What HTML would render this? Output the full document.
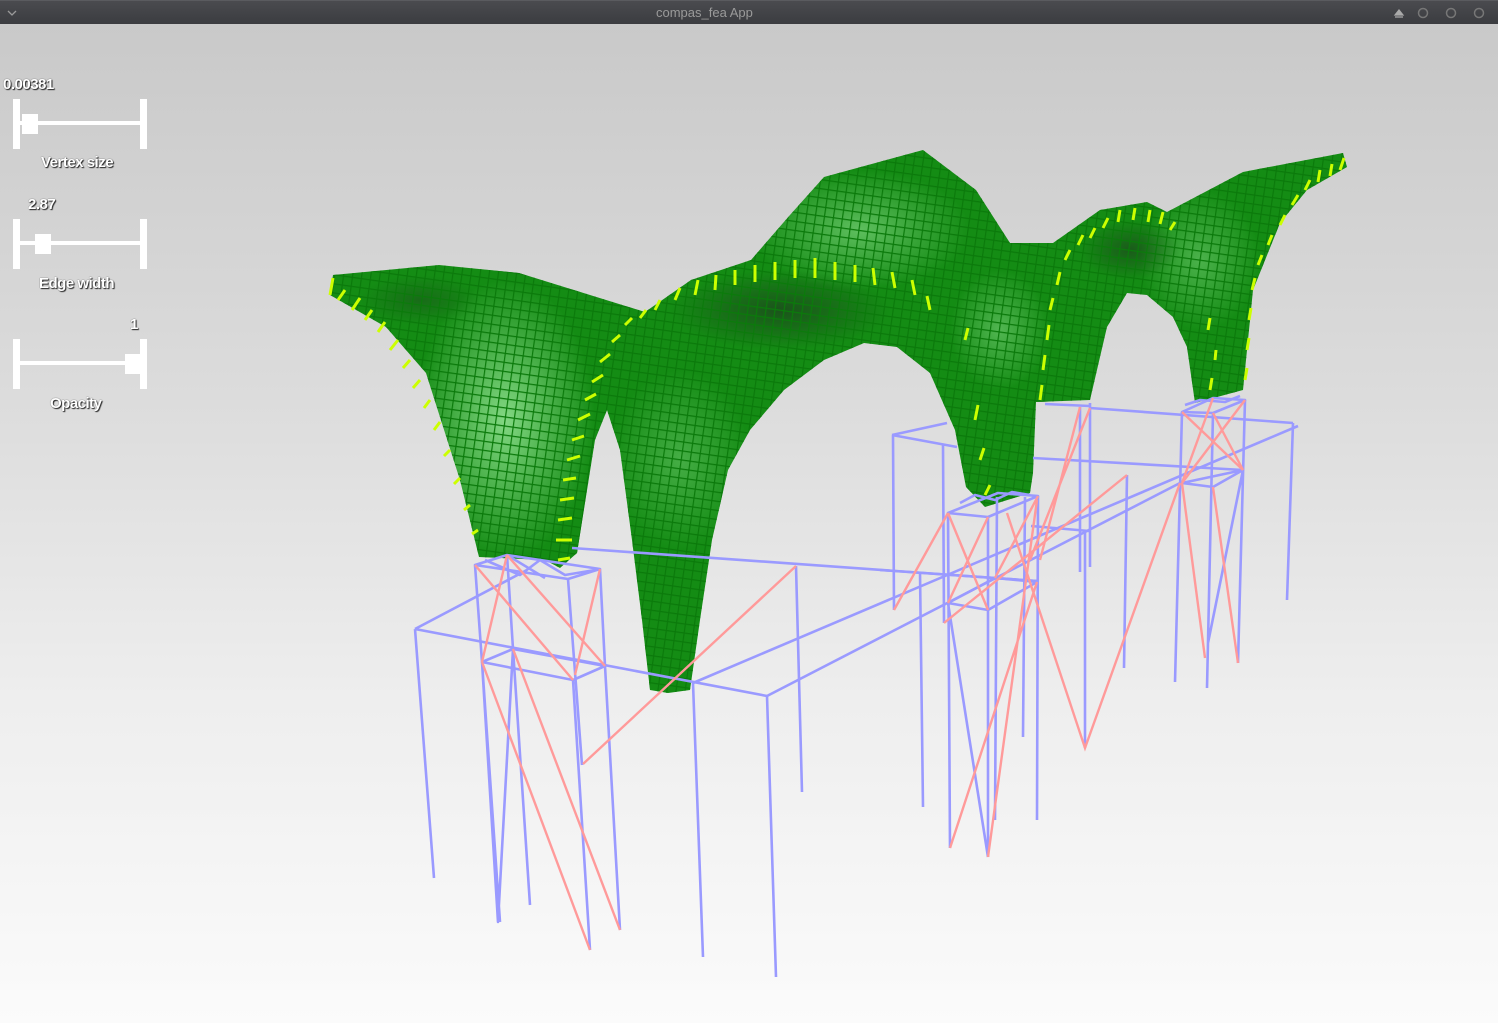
<!DOCTYPE html>
<html><head><meta charset="utf-8">
<style>
html,body{margin:0;padding:0;}
body{width:1498px;height:1023px;overflow:hidden;position:relative;font-family:"Liberation Sans",sans-serif;background:linear-gradient(#c9c9c9 24px,#dcdcdc 400px,#eeeeee 700px,#fbfbfb 1023px);}
.tb{position:absolute;left:0;top:0;width:1498px;height:24px;background:linear-gradient(#4a4b4f,#3b3c40);border-top:1px solid #5a5b5f;box-sizing:border-box;}
.tb .t{position:absolute;left:656px;top:4px;color:#9a9a9a;font-size:13px;}
.lbl{position:absolute;color:#fff;font-size:15px;font-weight:bold;text-shadow:1px 1px 1px #222,0 0 1px #444;letter-spacing:-0.5px;}
svg{position:absolute;left:0;top:0;}
</style></head><body>
<div class="tb"><div class="t">compas_fea App</div>
<svg width="1498" height="24" style="position:absolute">
<path d="M8 10 L12 14 L16 10" stroke="#9a9a9a" stroke-width="1.3" fill="none"/>
<path d="M1395 14 L1399 9 L1403 14 Z M1395 16 H1403" stroke="#aaa" fill="#aaa" stroke-width="1.2"/>
<circle cx="1423" cy="12" r="4.5" fill="none" stroke="#777" stroke-width="1.5"/>
<circle cx="1451" cy="12" r="4.5" fill="none" stroke="#777" stroke-width="1.5"/>
<circle cx="1479" cy="12" r="4.5" fill="none" stroke="#777" stroke-width="1.5"/>
</svg></div>

<svg width="1498" height="1023" style="top:0">
<g fill="#fff">
<rect x="13" y="99" width="7" height="50"/><rect x="140" y="99" width="7" height="50"/><rect x="20" y="121" width="120" height="4"/><rect x="22" y="114" width="16" height="20"/>
<rect x="13" y="219" width="7" height="50"/><rect x="140" y="219" width="7" height="50"/><rect x="20" y="241" width="120" height="4"/><rect x="35" y="234" width="16" height="20"/>
<rect x="13" y="339" width="7" height="50"/><rect x="140" y="339" width="7" height="50"/><rect x="20" y="361" width="120" height="4"/><rect x="125" y="354" width="16" height="20"/>
</g>
</svg>
<div class="lbl" style="left:3px;top:76px">0.00381</div>
<div class="lbl" style="left:41px;top:154px">Vertex size</div>
<div class="lbl" style="left:28px;top:196px">2.87</div>
<div class="lbl" style="left:39px;top:275px">Edge width</div>
<div class="lbl" style="left:130px;top:316px">1</div>
<div class="lbl" style="left:50px;top:395px">Opacity</div>

<svg width="1498" height="1023">
<defs>
<pattern id="mesh" width="9" height="9" patternUnits="userSpaceOnUse" patternTransform="rotate(8)">
<path d="M0 0 H9 M0 0 V9" stroke="#0b7a0b" stroke-width="2.4"/>
</pattern>
<radialGradient id="lt1" cx="0.5" cy="0.5" r="0.5"><stop offset="0" stop-color="#8fe08f"/><stop offset="1" stop-color="#8fe08f" stop-opacity="0"/></radialGradient>
<radialGradient id="dk1" cx="0.5" cy="0.5" r="0.5"><stop offset="0" stop-color="#1f3a1f"/><stop offset="1" stop-color="#1f3a1f" stop-opacity="0"/></radialGradient>
<clipPath id="shell"><path d="M333 275 L439 265 L519 273 L645 312 L691 280 L751 260 L790 215 L824 177 L923 150 L976 190 L1010 243 L1053 243 L1100 210 L1147 202 L1167 212 L1243 172 L1343 153 L1347 167 L1307 190 L1280 223 L1253 290 L1243 390 L1195 403 L1187 347 L1173 317 L1147 295 L1127 293 L1107 327 L1090 400 L1036 402 L1033 473 L1030 493 L985 507 L966 487 L955 430 L930 373 L897 347 L864 343 L824 360 L784 390 L750 430 L728 470 L712 540 L700 620 L690 690 L668 693 L650 690 L642 620 L632 540 L620 450 L607 410 L595 440 L577 553 L560 568 L545 560 L479 557 L460 480 L426 373 L386 327 L330 295 Z"/></clipPath>
</defs>
<g clip-path="url(#shell)">
<rect x="300" y="140" width="1100" height="560" fill="#148c14"/>
<ellipse cx="505" cy="420" rx="90" ry="140" fill="url(#lt1)" opacity="0.9"/>
<ellipse cx="680" cy="460" rx="70" ry="90" fill="url(#lt1)" opacity="0.4"/>
<ellipse cx="860" cy="230" rx="110" ry="60" fill="url(#lt1)" opacity="0.6"/>
<ellipse cx="1000" cy="330" rx="50" ry="60" fill="url(#lt1)" opacity="0.5"/>
<ellipse cx="1200" cy="260" rx="60" ry="70" fill="url(#lt1)" opacity="0.45"/>
<ellipse cx="780" cy="310" rx="110" ry="40" fill="url(#dk1)" opacity="0.7"/>
<ellipse cx="1130" cy="250" rx="50" ry="30" fill="url(#dk1)" opacity="0.6"/>
<ellipse cx="420" cy="300" rx="60" ry="25" fill="url(#dk1)" opacity="0.4"/>
<rect x="300" y="140" width="1100" height="560" fill="url(#mesh)"/>
</g>
<g stroke="#ccff00" stroke-width="3" stroke-linecap="butt">
<path d="M333 278 L330 295 M345 290 L338 300 M360 298 L352 310 M372 310 L365 320 M385 322 L378 332 M398 340 L390 350 M410 360 L403 368 M420 380 L413 388 M430 400 L424 408 M440 422 L434 430 M450 450 L444 456 M460 478 L454 484 M470 505 L464 510 M478 530 L472 534"/>
<path d="M558 560 L570 558 M556 540 L572 540 M558 520 L572 518 M560 500 L574 498 M563 480 L576 478 M567 460 L580 456 M572 440 L584 436 M578 420 L590 414 M585 400 L596 394 M592 382 L603 375 M600 362 L610 354 M612 342 L620 335 M625 325 L632 318 M640 318 L646 310 M655 310 L660 300 M675 300 L680 288 M695 295 L698 280 M715 290 L716 275 M735 285 L735 270 M755 282 L755 265 M775 280 L775 262 M795 278 L795 260 M815 278 L815 258 M835 280 L835 262 M855 282 L855 265 M875 285 L873 268 M895 288 L892 272 M915 295 L912 280 M930 310 L927 296"/>
<path d="M1040 400 L1042 385 M1043 370 L1045 355 M1047 340 L1049 325 M1050 310 L1053 298 M1057 285 L1060 272 M1065 260 L1070 250 M1078 245 L1083 235 M1090 238 L1095 228 M1103 228 L1108 218 M1118 222 L1120 210 M1133 220 L1135 208 M1148 222 L1150 210 M1160 224 L1163 212 M1170 230 L1175 222"/>
<path d="M1245 380 L1247 368 M1247 350 L1249 338 M1249 320 L1251 308 M1252 290 L1255 278 M1258 265 L1262 255 M1268 245 L1272 235 M1280 225 L1285 215 M1292 205 L1298 195 M1305 190 L1310 180 M1318 182 L1320 170 M1330 176 L1332 164 M1340 170 L1344 158"/>
<path d="M1210 390 L1212 378 M1215 360 L1216 350 M1208 330 L1210 318 M975 420 L978 405 M980 460 L984 448 M985 495 L990 485 M965 340 L968 328"/>
</g>
<g fill="none" stroke="#9a9aff" stroke-width="2.6" stroke-linejoin="round">
<path d="M475 565 L507 555 L600 569 L568 579 Z M475 565 L482 662 L513 649 L605 666 L573 680 L482 662 M568 579 L582 765 M600 569 L605 666 M507 555 L513 649"/>
<path d="M482 662 L500 922 M513 649 L530 905 M573 680 L590 950 M605 666 L620 930 M482 662 L498 922 L513 649 M590 950 L573 680"/>
<path d="M485 560 L520 575 L540 560 L565 575 L595 570 M507 555 L545 578"/>
<path d="M415 629 L527 570 M415 629 L434 878 M415 629 L767 696 L776 977 M693 683 L703 957 M572 548 L1037 581 M796 566 L802 792 M920 572 L923 807"/>
<path d="M693 683 L1298 426 M767 696 L1180 483 M880 570 L1037 581"/>
<path d="M948 513 L998 493 L1038 496 L988 517 Z M948 603 L995 578 L1037 582 L988 610 Z"/>
<path d="M948 513 L950 848 M988 517 L988 857 M1038 496 L1037 820 M1025 497 L1023 737 M997 497 L995 820 M948 603 L988 857"/>
<path d="M892 435 L947 423 M892 435 L957 447 M893 435 L894 610 M943 445 L944 623 M1033 458 L1243 470 M1090 408 L1293 423 M1293 423 L1287 600 M1127 475 L1124 668 M1080 407 L1080 572 M1090 403 L1090 567 M1085 530 L1085 748 M1045 404 L1090 406 M1031 526 L1089 531"/>
<path d="M1182 412 L1213 398 L1245 400 L1213 413 Z M1182 483 L1243 470 L1213 487 Z"/>
<path d="M1182 412 L1175 682 M1213 413 L1207 688 M1245 400 L1238 663 M1243 470 L1208 643"/>
<path d="M960 503 L975 495 L995 500 L1012 492 L1030 495 M1185 405 L1200 400 L1225 402 L1240 396"/>
</g>
<g fill="none" stroke="#ff9a9a" stroke-width="2.4">
<path d="M475 565 L573 680 M507 555 L482 662 M507 555 L605 666 M600 569 L575 675 M482 662 L590 950 M513 649 L620 930 M583 764 L796 566"/>
<path d="M948 513 L988 610 M988 517 L948 603 M1038 496 L995 578 M950 848 L1037 582 M988 857 L1037 500 M1007 513 L1085 748 L1180 483 M894 610 L948 513 M1080 407 L1040 560 M1090 408 L1030 560 M944 623 L1127 475"/>
<path d="M1182 412 L1243 470 M1245 400 L1182 483 M1213 413 L1243 470 M1213 398 L1182 483 M1182 483 L1205 658 M1213 487 L1238 663"/>
</g>
</svg>
</body></html>
